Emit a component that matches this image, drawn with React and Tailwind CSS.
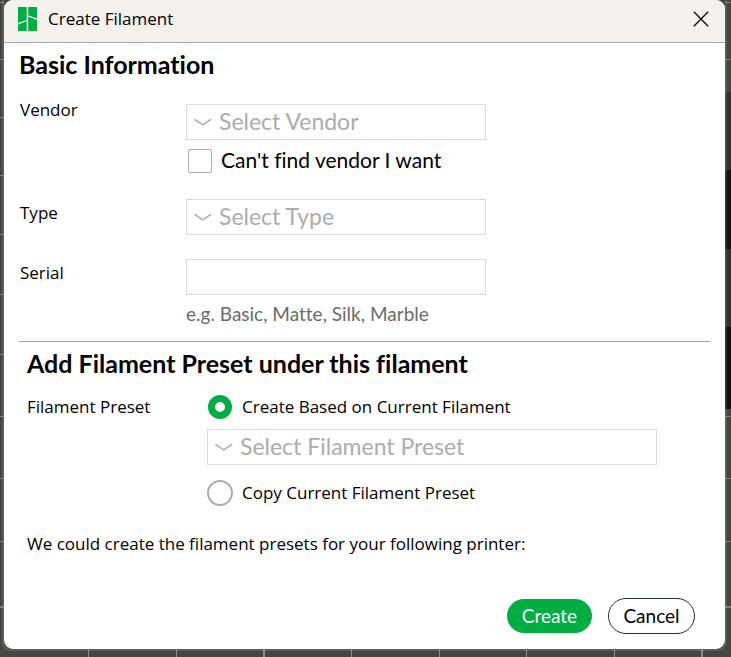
const SEGOE = "font-['Open_Sans','Noto_Sans',sans-serif]";

function Backdrop() {
  const rows = [2, 59, 117, 175, 234, 294, 354, 416, 478, 541, 606];
  const columns = [88, 176, 264, 351, 439, 526, 614, 702];
  return (
    <svg
      aria-hidden="true"
      className="absolute inset-0 h-full w-full"
      viewBox="0 0 731 657"
      preserveAspectRatio="none"
    >
      <rect width="731" height="657" fill="#444643" />
      <rect x="725" y="92" width="6" height="78" fill="#303130" />
      <rect x="725" y="170" width="6" height="79" fill="#131413" />
      <rect x="725" y="249" width="6" height="78" fill="#303130" />
      <rect x="725" y="327" width="6" height="82" fill="#111211" />
      {rows.map((y) => (
        <rect key={y} x="0" y={y} width="4" height="1" fill="#7c7e7b" />
      ))}
      {[2, 59, 416, 478, 541, 606].map((y) => (
        <rect key={y} x="725" y={y} width="6" height="1" fill="#7c7e7b" />
      ))}
      {columns.map((x) => (
        <rect key={x} x={x} y="649" width="1" height="8" fill="#8a8c89" />
      ))}
      <rect x="263" y="649" width="2" height="8" fill="#8a8c89" />
      <rect x="701" y="649" width="2" height="8" fill="#8a8c89" />
      <rect x="0" y="606" width="4" height="2" fill="#7c7e7b" />
      <rect x="725" y="606" width="6" height="2" fill="#7c7e7b" />
      <path d="M3 0V643Q3 650 12 650H716Q726 650 726 640V0" fill="none" stroke="#fff" strokeOpacity="0.13" strokeWidth="2" />
    </svg>
  );
}

function Dropdown({ id, label, placeholder, className }) {
  return (
    <div className={`relative h-9 max-w-full ${className}`}>
      <select
        id={id}
        aria-label={label}
        defaultValue=""
        className="block h-9 w-full appearance-none border border-[#dbdbdb] bg-white pb-0.5 pl-8 font-['Lato',sans-serif] text-[23px] leading-8 text-[#acacac] outline-none"
      >
        <option value="">{placeholder}</option>
      </select>
      <svg
        aria-hidden="true"
        className="pointer-events-none absolute left-2 top-3.5 h-2 w-[18px]"
        viewBox="0 0 18 8"
        fill="none"
        stroke="#acacac"
        strokeWidth="1.6"
        strokeLinecap="round"
        strokeLinejoin="round"
      >
        <path d="M1 1.6 8.8 6.8 16.6 1.6" />
      </svg>
    </div>
  );
}

function Radio({ id, label, defaultChecked }) {
  return (
    <div className="flex h-[26px] items-center gap-[9px]">
      <span className="flex size-[26px] items-center justify-center">
        <input
          id={id}
          type="radio"
          name="preset-source"
          defaultChecked={defaultChecked}
          className="size-[26px] appearance-none rounded-full border-2 border-[#acacac] bg-white checked:size-6 checked:border-[7px] checked:border-[#00ae42]"
        />
      </span>
      <label htmlFor={id}>{label}</label>
    </div>
  );
}

export default function App() {
  return (
    <div className={`relative min-h-screen bg-[#444643] pb-2 pl-1 pr-1.5 text-[17px] leading-5 text-black [font-variant-ligatures:none] ${SEGOE}`}>
      <Backdrop />
      <div role="dialog" aria-labelledby="dialog-title" className="relative overflow-hidden rounded-[9px] bg-white">
        <header className="flex h-[43px] items-center border-b border-[#a6a6a6] bg-[#f5f1ee] pb-1 pl-3.5 pr-4">
          <svg aria-hidden="true" className="size-6 w-[19px]" viewBox="0 0 19 24" fill="#00ae42">
            <path d="M0 0H8.7V13L0 16ZM0 17.4 8.7 14.2V24H0ZM10.2 0H19V11.6L10.2 8.2ZM10.2 9.6 19 13V24H10.2Z" />
          </svg>
          <h1 id="dialog-title" className="ml-[11px] flex-1">
            Create Filament
          </h1>
          <button type="button" aria-label="Close" className="size-4">
            <svg className="size-4" viewBox="0 0 16 16" fill="none" stroke="#111" strokeWidth="1.4">
              <path d="M.8.8 15.2 15.2M15.2.8.8 15.2" />
            </svg>
          </button>
        </header>

        <main className="px-[15px] pb-[15px] pt-[7px]">
          <section>
            <h2 className="font-['Lato',sans-serif] text-[25px] font-bold leading-7">Basic Information</h2>

            <div className="mt-[22px] grid grid-cols-[166px_1fr] pl-px">
              <label htmlFor="vendor">Vendor</label>
              <div className="pt-1">
                <Dropdown id="vendor" label="Vendor" placeholder="Select Vendor" className="w-[300px]" />
                <div className="mt-2 flex h-[26px] items-center gap-[9px] pl-0.5">
                  <input
                    id="custom-vendor"
                    type="checkbox"
                    className="size-6 appearance-none rounded-xs border border-[#acacac] bg-white"
                  />
                  <label htmlFor="custom-vendor" className="pb-0.5 font-['Lato',sans-serif] text-[21px] leading-6">
                    Can't find vendor I want
                  </label>
                </div>
              </div>
            </div>

            <div className="mt-[25px] grid grid-cols-[166px_1fr] pl-px">
              <label htmlFor="type" className="pt-1">
                Type
              </label>
              <Dropdown id="type" label="Type" placeholder="Select Type" className="w-[300px]" />
            </div>

            <div className="mt-6 grid grid-cols-[166px_1fr] pl-px">
              <label htmlFor="serial" className="pt-1">
                Serial
              </label>
              <div>
                <input
                  id="serial"
                  type="text"
                  className="block h-9 w-[300px] max-w-full border border-[#dbdbdb] bg-white px-2 outline-none"
                />
                <p className="mt-[7px] font-['Lato',sans-serif] text-[19px] leading-6 text-[#6b6b6b]">
                  e.g. Basic, Matte, Silk, Marble
                </p>
              </div>
            </div>
          </section>

          <hr className="mt-[15px] border-[#a6a6a6]" />

          <section className="pl-2 pt-[7px]">
            <h2 className="font-['Lato',sans-serif] text-[25px] font-bold leading-7">
              Add Filament Preset under this filament
            </h2>
            <div className="mt-[17px] grid grid-cols-[180px_1fr]">
              <span id="preset-label" className="leading-[26px]">
                Filament Preset
              </span>
              <div role="radiogroup" aria-labelledby="preset-label">
                <Radio id="based-on" label="Create Based on Current Filament" defaultChecked />
                <div className="mb-[15px] mt-[9px]">
                  <Dropdown
                    id="preset"
                    label="Filament Preset"
                    placeholder="Select Filament Preset"
                    className="w-[450px]"
                  />
                </div>
                <Radio id="copy-current" label="Copy Current Filament Preset" />
              </div>
            </div>
            <p className="mt-[26px] leading-6">
              We could create the filament presets for your following printer:
            </p>
          </section>

          <footer className="mt-[42px] flex items-center justify-end gap-4 pr-[15px] font-['Lato',sans-serif] text-[19px]">
            <button type="button" className="h-[34px] w-[85px] rounded-full bg-[#00ae42] text-white">
              Create
            </button>
            <button type="button" className="h-9 w-[87px] rounded-full border border-[#262e30] bg-white">
              Cancel
            </button>
          </footer>
        </main>
      </div>
    </div>
  );
}
